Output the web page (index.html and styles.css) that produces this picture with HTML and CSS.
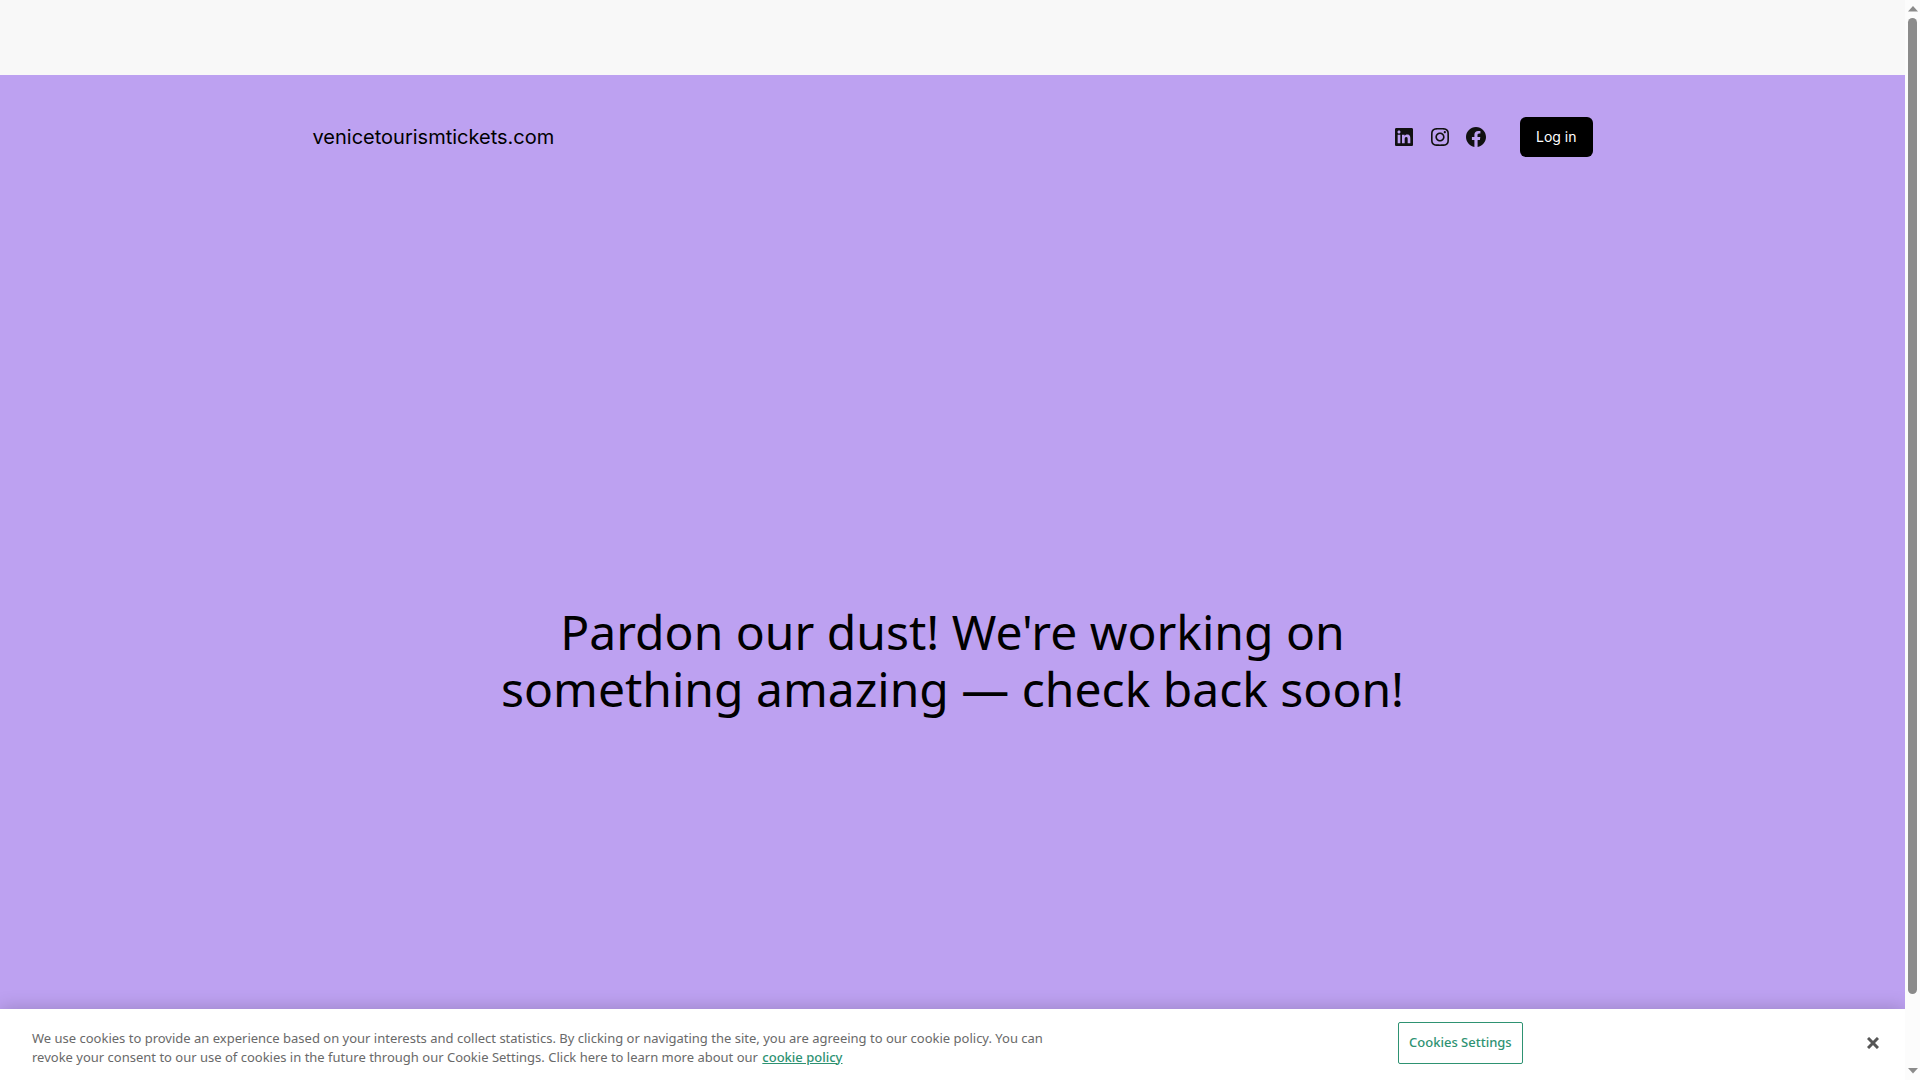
FILE: index.html
```html
<!DOCTYPE html>
<html lang="en">
<head>
  <meta charset="UTF-8" />
  <meta name="viewport" content="width=device-width, initial-scale=1.0"/>
  <title>venicetourismtickets.com</title>
  <link rel="stylesheet" href="styles.css">
</head>
<body>

  <div class="page">
    <div class="top-space"></div>

    <div class="site">
      <header class="site-header">
        <a class="site-title" href="#">venicetourismtickets.com</a>
        <div class="header-right">
          <nav class="social-links" aria-label="Social links">
            <a href="#" aria-label="LinkedIn">
              <svg width="24" height="24" viewBox="0 0 24 24"><path d="M19.7,3H4.3C3.582,3,3,3.582,3,4.3v15.4C3,20.418,3.582,21,4.3,21h15.4c0.718,0,1.3-0.582,1.3-1.3V4.3C21,3.582,20.418,3,19.7,3z M8.339,18.338H5.667v-8.59h2.672V18.338z M7.004,8.574c-0.857,0-1.549-0.694-1.549-1.548c0-0.855,0.691-1.548,1.549-1.548c0.854,0,1.547,0.694,1.547,1.548C8.551,7.881,7.858,8.574,7.004,8.574z M18.339,18.338h-2.669v-4.177c0-0.996-0.017-2.278-1.387-2.278c-1.389,0-1.601,1.086-1.601,2.206v4.249h-2.667v-8.59h2.559v1.174h0.037c0.356-0.675,1.227-1.387,2.526-1.387c2.703,0,3.203,1.779,3.203,4.092V18.338z"/></svg>
            </a>
            <a href="#" aria-label="Instagram">
              <svg width="24" height="24" viewBox="0 0 24 24"><path d="M12,4.622c2.403,0,2.688,0.009,3.637,0.052c0.877,0.04,1.354,0.187,1.671,0.31c0.42,0.163,0.72,0.358,1.035,0.673c0.315,0.315,0.51,0.615,0.673,1.035c0.123,0.317,0.27,0.794,0.31,1.671c0.043,0.949,0.052,1.234,0.052,3.637s-0.009,2.688-0.052,3.637c-0.04,0.877-0.187,1.354-0.31,1.671c-0.163,0.42-0.358,0.72-0.673,1.035c-0.315,0.315-0.615,0.51-1.035,0.673c-0.317,0.123-0.794,0.27-1.671,0.31c-0.949,0.043-1.233,0.052-3.637,0.052s-2.688-0.009-3.637-0.052c-0.877-0.04-1.354-0.187-1.671-0.31c-0.42-0.163-0.72-0.358-1.035-0.673c-0.315-0.315-0.51-0.615-0.673-1.035c-0.123-0.317-0.27-0.794-0.31-1.671C4.631,14.688,4.622,14.403,4.622,12s0.009-2.688,0.052-3.637c0.04-0.877,0.187-1.354,0.31-1.671c0.163-0.42,0.358-0.72,0.673-1.035c0.315-0.315,0.615-0.51,1.035-0.673c0.317-0.123,0.794-0.27,1.671-0.31C9.312,4.631,9.597,4.622,12,4.622 M12,3C9.556,3,9.249,3.01,8.289,3.054C7.331,3.098,6.677,3.25,6.105,3.472C5.513,3.702,5.011,4.01,4.511,4.511c-0.5,0.5-0.808,1.002-1.038,1.594C3.25,6.677,3.098,7.331,3.054,8.289C3.01,9.249,3,9.556,3,12c0,2.444,0.01,2.751,0.054,3.711c0.044,0.958,0.196,1.612,0.418,2.185c0.23,0.592,0.538,1.094,1.038,1.594c0.5,0.5,1.002,0.808,1.594,1.038c0.572,0.222,1.227,0.375,2.185,0.418C9.249,20.99,9.556,21,12,21s2.751-0.01,3.711-0.054c0.958-0.044,1.612-0.196,2.185-0.418c0.592-0.23,1.094-0.538,1.594-1.038c0.5-0.5,0.808-1.002,1.038-1.594c0.222-0.572,0.375-1.227,0.418-2.185C20.99,14.751,21,14.444,21,12s-0.01-2.751-0.054-3.711c-0.044-0.958-0.196-1.612-0.418-2.185c-0.23-0.592-0.538-1.094-1.038-1.594c-0.5-0.5-1.002-0.808-1.594-1.038c-0.572-0.222-1.227-0.375-2.185-0.418C14.751,3.01,14.444,3,12,3L12,3z M12,7.378c-2.552,0-4.622,2.069-4.622,4.622S9.448,16.622,12,16.622s4.622-2.069,4.622-4.622S14.552,7.378,12,7.378z M12,15c-1.657,0-3-1.343-3-3s1.343-3,3-3s3,1.343,3,3S13.657,15,12,15z M16.804,6.116c-0.596,0-1.08,0.484-1.08,1.08s0.484,1.08,1.08,1.08c0.596,0,1.08-0.484,1.08-1.08S17.401,6.116,16.804,6.116z"/></svg>
            </a>
            <a href="#" aria-label="Facebook">
              <svg width="24" height="24" viewBox="0 0 24 24"><path d="M12 2C6.5 2 2 6.5 2 12c0 5 3.7 9.1 8.4 9.9v-7H7.9V12h2.5V9.8c0-2.5 1.5-3.9 3.8-3.9 1.1 0 2.2.2 2.2.2v2.5h-1.3c-1.2 0-1.6.8-1.6 1.6V12h2.8l-.4 2.9h-2.3v7C18.3 21.1 22 17 22 12c0-5.500-4.500-10-10-10z"/></svg>
            </a>
          </nav>
          <button class="login-btn" type="button">Log in</button>
        </div>
      </header>

      <main class="hero">
        <h1>Pardon our dust! We're working on something amazing — check back soon!</h1>
      </main>
    </div>

    <section class="cookie-banner" aria-label="Cookie notice">
      <p class="cookie-text">We use cookies to provide an experience based on your interests and collect statistics. By clicking or navigating the site, you are agreeing to our cookie policy. You can revoke your consent to our use of cookies in the future through our Cookie Settings. Click here to learn more about our <a href="#">cookie policy</a></p>
      <div class="cookie-actions">
        <button class="settings-btn" type="button">Cookies Settings</button>
        <button class="close-btn" type="button" aria-label="Close">
          <svg width="12" height="12" viewBox="0 0 12 12"><path d="M1 1l10 10M11 1L1 11"/></svg>
        </button>
      </div>
    </section>
  </div>

  <div class="scrollbar" aria-hidden="true">
    <svg width="10" height="6" viewBox="0 0 10 6"><path d="M5 0l5 5.500H0z"/></svg>
    <div class="track"><div class="thumb"></div></div>
    <svg width="10" height="6" viewBox="0 0 10 6"><path d="M5 5.500L0 0h10z"/></svg>
  </div>

</body>
</html>
```
FILE: styles.css
```css
* {
  box-sizing: border-box;
  margin: 0;
  padding: 0;
}

body {
  display: flex;
  height: 100vh;
  overflow: hidden;
  font-family: "Noto Sans", sans-serif;
  background-color: #f8f8f8;
  color: #000;
}

.page {
  flex: 1;
  display: flex;
  flex-direction: column;
  min-width: 0;
}

.top-space {
  height: 75px;
}

.site {
  flex: 1;
  background-color: #bda1f1;
}

.site-header {
  display: flex;
  justify-content: space-between;
  align-items: center;
  max-width: 1280px;
  margin: 0 auto;
  padding: 42px 0;
}

.site-title {
  font-family: Inter, sans-serif;
  font-size: 20px;
  color: #000;
  text-decoration: none;
}

.header-right {
  display: flex;
  align-items: center;
  gap: 32px;
}

.social-links {
  display: flex;
  gap: 12px;
}

.social-links a {
  display: block;
  height: 24px;
}

.social-links svg {
  fill: #111;
}

.login-btn {
  height: 40px;
  padding: 0 16px 1px;
  border: none;
  border-radius: 6px;
  background-color: #000;
  color: #fff;
  font-family: Inter, sans-serif;
  font-size: 14px;
  cursor: pointer;
}

.hero {
  padding: 404px 20px 0;
}

.hero h1 {
  max-width: 960px;
  margin: 0 auto;
  font-size: 48px;
  font-weight: 400;
  line-height: 57px;
  text-align: center;
}

/* cookie notice */
.cookie-banner {
  display: flex;
  align-items: center;
  min-height: 71px;
  padding: 0 20px 4px 32px;
  background-color: #fff;
  box-shadow: 0 0 18px rgba(0, 0, 0, 0.2);
}

.cookie-text {
  flex: 1;
  padding-top: 10px;
  padding-right: 330px;
  color: #696969;
  font-size: 13px;
  line-height: 19px;
}

.cookie-text a {
  color: #2e9272;
  font-weight: 500;
  margin-left: 1px;
}

.cookie-actions {
  display: flex;
  justify-content: space-between;
  align-items: center;
  width: 487px;
}

.settings-btn {
  height: 42px;
  padding: 0 10px 1px;
  border: 1px solid #2e9272;
  border-radius: 2px;
  background: none;
  color: #2e9272;
  font-family: "Noto Sans", sans-serif;
  font-size: 13px;
  font-weight: 500;
  cursor: pointer;
}

.close-btn {
  display: flex;
  padding: 6px;
  border: none;
  background: none;
  cursor: pointer;
}

.close-btn path {
  stroke: #565656;
  stroke-width: 3;
}

/* scroll track on the right edge */
.scrollbar {
  display: flex;
  flex-direction: column;
  align-items: center;
  width: 15px;
  padding: 6px 0;
  background-color: #fcfcfc;
}

.scrollbar svg {
  fill: #8b8b8b;
}

.track {
  flex: 1;
  padding: 6px 0 74px;
}

.thumb {
  width: 9px;
  height: 100%;
  border-radius: 5px;
  background-color: #8b8b8b;
}
```
